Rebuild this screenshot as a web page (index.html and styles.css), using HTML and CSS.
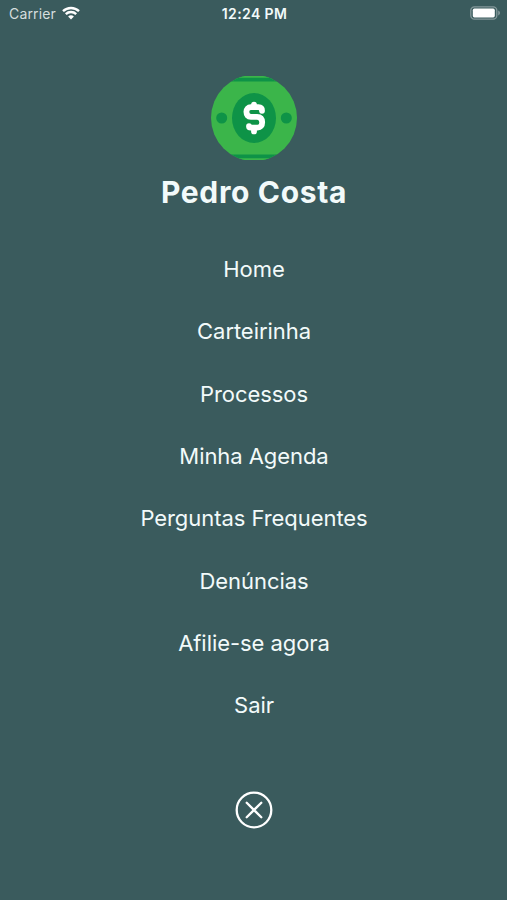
FILE: index.html
```html
<!DOCTYPE html>
<html lang="pt-BR">
  <head>
    <meta charset="UTF-8" />
    <meta name="viewport" content="width=device-width, initial-scale=1.0" />
    <title>Menu</title>
    <link rel="stylesheet" href="styles.css">
  </head>
  <body>
    <div class="screen">
      <header class="status-bar">
        <div class="carrier">
          <span>Carrier</span>
          <svg class="wifi" viewBox="0 0 18 14">
            <path d="M1 5.2a11.5 11.5 0 0 1 16 0" />
            <path d="M3.8 8.1a7.5 7.5 0 0 1 10.4 0" />
            <path class="dot" d="M6.1 10.6a4.2 4.2 0 0 1 5.8 0L9 13.6z" />
          </svg>
        </div>
        <div class="time">12:24 PM</div>
        <div class="battery">
          <svg viewBox="0 0 31 14">
            <rect class="shell" x=".8" y=".8" width="26" height="12.4" rx="3.6" />
            <rect class="charge" x="2.8" y="2.6" width="22" height="8.8" rx="1.6" />
            <path class="cap" d="M28.2 4.6c2.4.8 2.4 4 0 4.8z" />
          </svg>
        </div>
      </header>

      <div class="profile">
        <svg class="avatar" viewBox="0 0 86 84">
          <defs>
            <clipPath id="round"><circle cx="43" cy="42" r="43" /></clipPath>
          </defs>
          <g clip-path="url(#round)">
            <rect width="86" height="84" fill="#3bb54a" />
            <path d="M0 0h86v5.4H0zM0 78.6h86V84H0z" fill="#0e9347" />
            <path d="M26 0h34v1.8H26zM26 82.2h34V84H26z" fill="#3bb54a" />
            <ellipse cx="43" cy="42" rx="22" ry="25" fill="#0e9347" />
            <circle cx="10.7" cy="42" r="5.5" fill="#0e9347" />
            <circle cx="75.3" cy="42" r="5.5" fill="#0e9347" />
            <path class="dollar" d="M51 34.8c0-2.4-1.4-3.6-3.6-3.6h-7.6c-2.6 0-4.4 1.8-4.4 4.6 0 3.2 1.6 5 4.4 5h6.4c3.2 0 5 2 5 5.4 0 3.4-1.8 5.4-4.6 5.4h-6.8c-1.2 0-1.8-.4-1.8-1.4M43 28.6v2.6M43 52v3.4" />
          </g>
        </svg>
        <h1 class="name">Pedro Costa</h1>
      </div>

      <nav class="menu">
        <a>Home</a>
        <a>Carteirinha</a>
        <a>Processos</a>
        <a>Minha Agenda</a>
        <a>Perguntas Frequentes</a>
        <a>Denúncias</a>
        <a>Afilie-se agora</a>
        <a>Sair</a>
      </nav>

      <svg class="close" viewBox="0 0 38 38">
        <circle cx="19" cy="19" r="17.3" />
        <path d="M11.7 11.7l14.6 14.6M26.3 11.7L11.7 26.3" />
      </svg>
    </div>
  </body>
</html>
```
FILE: styles.css
```css
* {
  margin: 0;
  padding: 0;
  box-sizing: border-box;
}

body {
  background: #3a5b5d;
  color: #f2fafa;
  font-family: Inter, "Liberation Sans", sans-serif;
}

.screen {
  height: 900px;
  display: flex;
  flex-direction: column;
  align-items: center;
}

/* status bar */
.status-bar {
  width: 100%;
  height: 27px;
  padding: 0 6px 0 9px;
  display: grid;
  grid-template-columns: 1fr auto 1fr;
  align-items: center;
  font-size: 14px;
}
.carrier {
  display: flex;
  align-items: center;
  gap: 6px;
  letter-spacing: 0.15px;
  color: #d5dede;
}
.wifi {
  width: 18px;
  height: 14px;
  margin-top: -1px;
  fill: none;
  stroke: #fff;
  stroke-width: 2.4;
}
.wifi .dot {
  fill: #fff;
  stroke: none;
}
.time {
  font-weight: 600;
  letter-spacing: 0.4px;
  margin-left: -1px;
}
.battery {
  justify-self: end;
  height: 14px;
  margin-top: -1px;
}
.battery svg {
  display: block;
  width: 31px;
  height: 14px;
}
.shell {
  fill: none;
  stroke: #84989a;
  stroke-width: 1.3;
}
.charge {
  fill: #fff;
}
.cap {
  fill: #84989a;
}

/* user */
.profile {
  margin-top: 49px;
  display: flex;
  flex-direction: column;
  align-items: center;
}
.avatar {
  width: 86px;
  height: 84px;
}
.dollar {
  fill: none;
  stroke: #fff;
  stroke-width: 5.8;
  stroke-linecap: round;
}
.name {
  margin-top: 12px;
  padding-left: 1px;
  font-size: 30px;
  line-height: 40px;
  font-weight: 700;
  letter-spacing: 0.65px;
}

.menu {
  margin-top: 26px;
  padding-left: 1px;
  display: flex;
  flex-direction: column;
  align-items: center;
}
.menu a {
  font-size: 22px;
  line-height: 62.35px;
  letter-spacing: -0.06px;
}

.close {
  margin-top: 54px;
  width: 38px;
  height: 38px;
  fill: none;
  stroke: #fff;
  stroke-width: 2.3;
  stroke-linecap: round;
}
```
